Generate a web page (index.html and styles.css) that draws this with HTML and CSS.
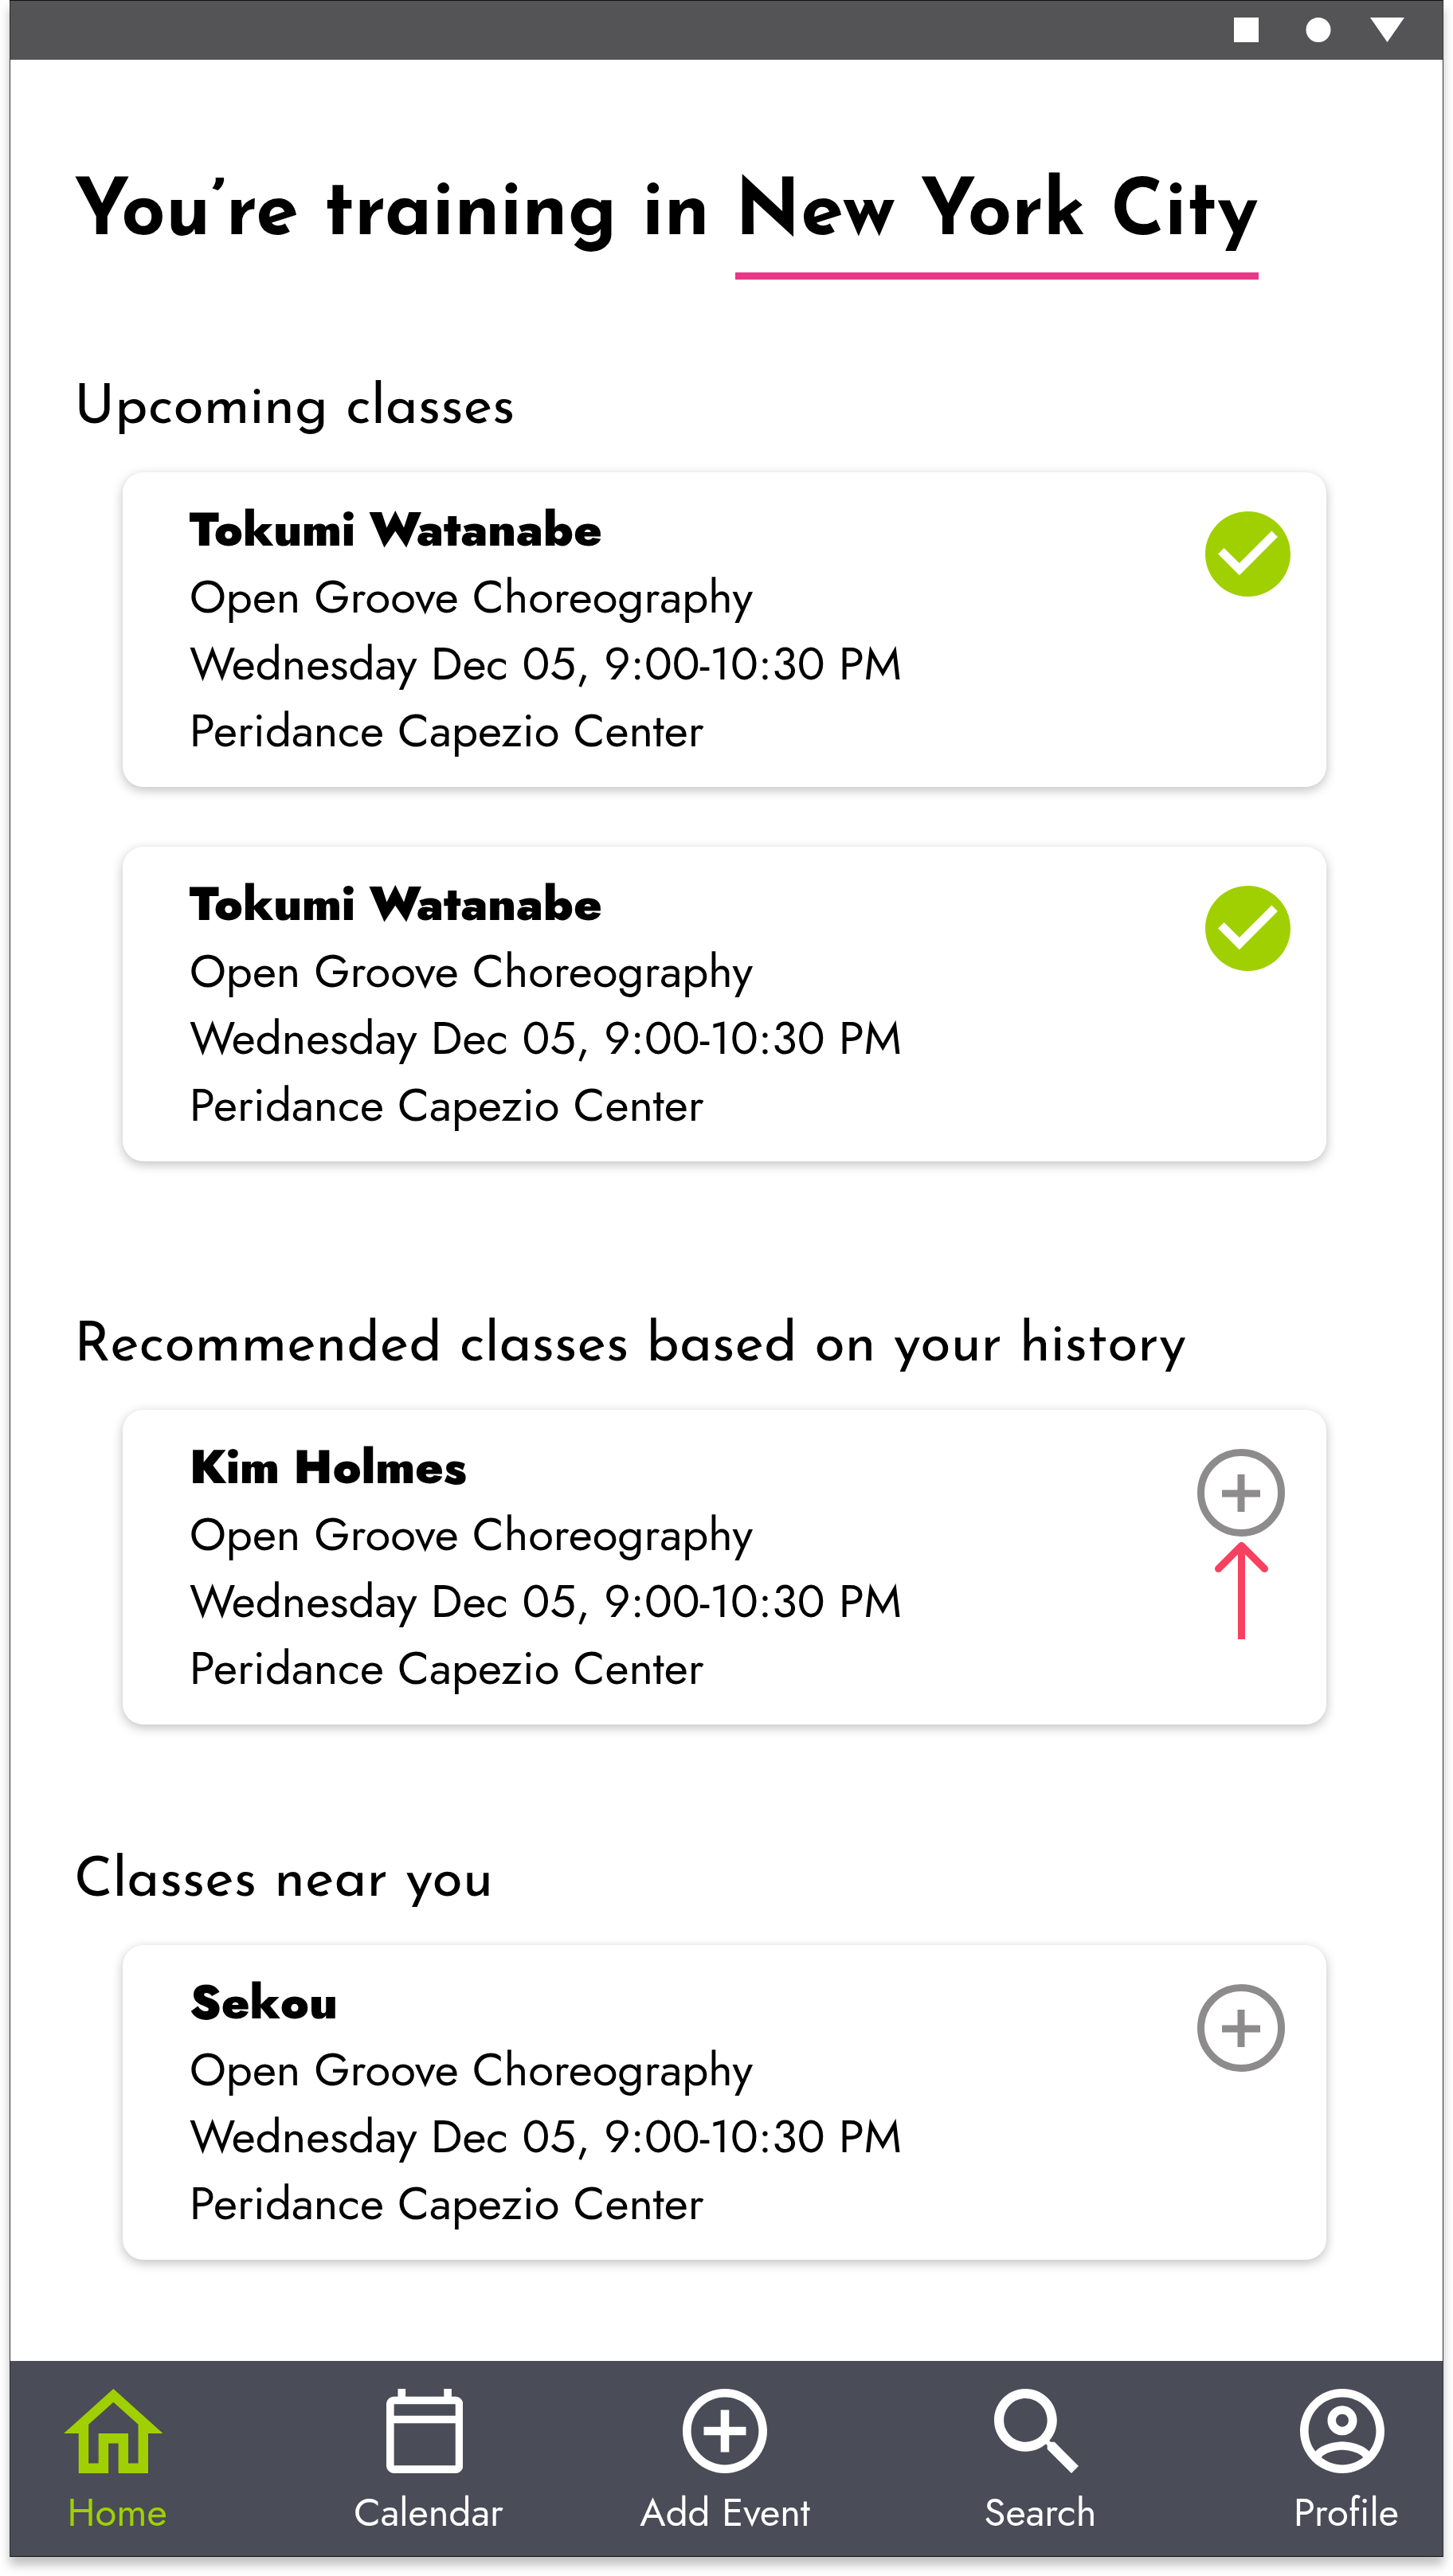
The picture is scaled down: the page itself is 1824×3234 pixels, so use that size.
FILE: index.html
```html
<!DOCTYPE html>
<html lang="en">
<head>
  <meta charset="utf-8">
  <meta name="viewport" content="width=device-width, initial-scale=1">
  <title>Dance classes</title>
  <link rel="stylesheet" href="styles.css">
</head>
<body>
  <div class="screen">
    <header class="status-bar">
      <svg class="status-icons" viewBox="0 0 214 31" aria-hidden="true">
        <rect width="31" height="31"/>
        <circle cx="106" cy="15.5" r="15.5"/>
        <path d="M171 0h43l-21.5 31z"/>
      </svg>
    </header>

    <main class="content">
      <h1 class="title">You’re training in <a class="city" href="#city">New York City</a></h1>

      <section class="section">
        <h2 class="section-title">Upcoming classes</h2>
        <div class="cards">
          <article class="card">
            <div class="card-text">
              <h3 class="teacher">Tokumi Watanabe</h3>
              <p>Open Groove Choreography</p>
              <p>Wednesday Dec 05, 9:00-10:30 PM</p>
              <p>Peridance Capezio Center</p>
            </div>
            <div class="card-action">
              <button class="booked" type="button" aria-label="Booked">
                <svg viewBox="2 2 20 20" aria-hidden="true"><path d="M12 2C6.48 2 2 6.48 2 12s4.48 10 10 10 10-4.48 10-10S17.52 2 12 2zm-2 15l-5-5 1.41-1.41L10 14.17l7.59-7.59L19 8l-9 9z"/></svg>
              </button>
            </div>
          </article>
          <article class="card">
            <div class="card-text">
              <h3 class="teacher">Tokumi Watanabe</h3>
              <p>Open Groove Choreography</p>
              <p>Wednesday Dec 05, 9:00-10:30 PM</p>
              <p>Peridance Capezio Center</p>
            </div>
            <div class="card-action">
              <button class="booked" type="button" aria-label="Booked">
                <svg viewBox="2 2 20 20" aria-hidden="true"><path d="M12 2C6.48 2 2 6.48 2 12s4.48 10 10 10 10-4.48 10-10S17.52 2 12 2zm-2 15l-5-5 1.41-1.41L10 14.17l7.59-7.59L19 8l-9 9z"/></svg>
              </button>
            </div>
          </article>
        </div>
      </section>

      <section class="section section-recommended">
        <h2 class="section-title">Recommended classes based on your history</h2>
        <div class="cards">
          <article class="card">
            <div class="card-text">
              <h3 class="teacher">Kim Holmes</h3>
              <p>Open Groove Choreography</p>
              <p>Wednesday Dec 05, 9:00-10:30 PM</p>
              <p>Peridance Capezio Center</p>
            </div>
            <div class="card-action card-action-add">
              <button class="add" type="button" aria-label="Add class">
                <svg viewBox="0 0 110 110" aria-hidden="true"><circle cx="55" cy="55" r="50.5"/><path d="M55 32v47M31 56h48"/></svg>
              </button>
              <svg class="arrow" viewBox="0 0 67 122" aria-hidden="true"><path class="arrow-head" d="M4.500 33.500l29-29 29 29"/><path d="M33.500 6v116"/></svg>
            </div>
          </article>
        </div>
      </section>

      <section class="section section-near">
        <h2 class="section-title">Classes near you</h2>
        <div class="cards">
          <article class="card">
            <div class="card-text">
              <h3 class="teacher">Sekou</h3>
              <p>Open Groove Choreography</p>
              <p>Wednesday Dec 05, 9:00-10:30 PM</p>
              <p>Peridance Capezio Center</p>
            </div>
            <div class="card-action card-action-add">
              <button class="add" type="button" aria-label="Add class">
                <svg viewBox="0 0 110 110" aria-hidden="true"><circle cx="55" cy="55" r="50.5"/><path d="M55 32v47M31 56h48"/></svg>
              </button>
            </div>
          </article>
        </div>
      </section>
    </main>

    <nav class="tabs" aria-label="Main">
      <a class="tab tab-current" href="#home" aria-current="page">
        <svg class="tab-icon" viewBox="2 3 20 17" aria-hidden="true"><path d="M12 5.69l5 4.5V18h-2v-6H9v6H7v-7.81l5-4.5M12 3L2 12h3v8h6v-6h2v6h6v-8h3L12 3z"/></svg>
        <span>Home</span>
      </a>
      <a class="tab" href="#calendar">
        <svg class="tab-icon" viewBox="2 1 20 22" aria-hidden="true"><path d="M20 3h-1V1h-2v2H7V1H5v2H4c-1.100 0-2 .9-2 2v16c0 1.100.9 2 2 2h16c1.100 0 2-.9 2-2V5c0-1.100-.9-2-2-2zm0 18H4V10h16v11zm0-13H4V5h16v3z"/></svg>
        <span>Calendar</span>
      </a>
      <a class="tab" href="#add">
        <svg class="tab-icon tab-icon-centered" viewBox="2 2 20 20" aria-hidden="true"><path d="M13 7h-2v4H7v2h4v4h2v-4h4v-2h-4V7zm-1-5C6.490 2 2 6.490 2 12s4.490 10 10 10 10-4.490 10-10S17.510 2 12 2zm0 18c-4.410 0-8-3.590-8-8s3.590-8 8-8 8 3.590 8 8-3.590 8-8 8z"/></svg>
        <span>Add Event</span>
      </a>
      <a class="tab" href="#search">
        <svg class="tab-icon" viewBox="3 3 17.490 17.490" aria-hidden="true"><path d="M15.500 14h-.79l-.28-.27C15.410 12.590 16 11.110 16 9.500 16 5.910 13.090 3 9.500 3S3 5.910 3 9.500 5.910 16 9.500 16c1.610 0 3.090-.59 4.230-1.570l.27.28v.79l5 4.990L20.490 19l-4.990-5zm-6 0C7.010 14 5 11.990 5 9.500S7.010 5 9.500 5 14 7.010 14 9.500 11.990 14 9.500 14z"/></svg>
        <span>Search</span>
      </a>
      <a class="tab" href="#profile">
        <svg class="tab-icon" viewBox="2 2 20 20" aria-hidden="true"><path d="M12 2C6.480 2 2 6.480 2 12s4.480 10 10 10 10-4.480 10-10S17.520 2 12 2zM7.070 18.280c.43-.9 3.050-1.780 4.930-1.780s4.510.88 4.930 1.780C15.570 19.360 13.860 20 12 20s-3.570-.64-4.930-1.720zm11.290-1.450c-1.430-1.740-4.900-2.330-6.360-2.330s-4.930.59-6.360 2.330C4.620 15.490 4 13.820 4 12c0-4.410 3.590-8 8-8s8 3.590 8 8c0 1.820-.62 3.490-1.640 4.830zM12 6c-1.940 0-3.500 1.560-3.500 3.500S10.060 13 12 13s3.500-1.560 3.500-3.500S13.940 6 12 6zm0 5c-.83 0-1.500-.67-1.500-1.500S11.170 8 12 8s1.500.67 1.500 1.500S12.830 11 12 11z"/></svg>
        <span>Profile</span>
      </a>
    </nav>
  </div>
</body>
</html>
```
FILE: styles.css
```css
*,
*::before,
*::after {
  box-sizing: border-box;
}

body {
  margin: 0;
  background: #fff;
  color: #000;
  font-family: Jost, Lato, sans-serif;
}

h1,
h2,
h3,
p {
  margin: 0;
}

a {
  color: inherit;
  text-decoration: none;
}

button {
  display: block;
  margin: 0;
  padding: 0;
  border: 0;
  background: none;
  cursor: pointer;
}

svg {
  display: block;
}

.screen {
  margin: 0 12px 24px;
  border: 1px solid #333;
  border-top-color: #111;
  border-bottom-color: #111;
  background: #fff;
  box-shadow: 0 10px 12px rgba(0, 0, 0, 0.25);
}

/* Status bar */
.status-bar {
  display: flex;
  justify-content: flex-end;
  padding: 21px 48px 22px;
  background: #545456;
}

.status-icons {
  height: 31px;
  fill: #fff;
}

/* Page content */
.content {
  padding: 146px 146px 127px 80px;
}

.title {
  font: 700 97px/97px "Josefin Sans", Lato, sans-serif;
}

.city {
  display: inline-block;
  padding-bottom: 24px;
  border-bottom: 9px solid #e83785;
}

.section {
  margin-top: 128px;
}

.section-recommended {
  margin-top: 198px;
}

.section-near {
  margin-top: 163px;
}

.section-title {
  font: 400 70px/70px "Josefin Sans", Lato, sans-serif;
}

.cards {
  display: flex;
  flex-direction: column;
  gap: 75px;
  margin: 44px 0 0 61px;
}

/* Class card */
.card {
  display: flex;
  justify-content: space-between;
  padding: 30px 0 29px 84px;
  border-radius: 26px;
  background: #fff;
  box-shadow: 0 4px 14px rgba(0, 0, 0, 0.25);
}

.card-text {
  font-size: 58px;
  line-height: 84px;
}

.teacher {
  font-size: 59px;
  font-weight: 900;
}

.card-action {
  display: flex;
  flex-direction: column;
  align-items: center;
  gap: 7px;
  height: 0;
  padding: 19px 45px 0 0;
}

.card-action-add {
  padding-right: 52px;
}

.booked {
  width: 107px;
  fill: #a0d001;
}

.add {
  width: 110px;
  fill: none;
  stroke: #8d8b8c;
  stroke-width: 9px;
}

.arrow {
  flex: none;
  width: 67px;
  fill: none;
  stroke: #f84060;
  stroke-width: 9px;
}

.arrow-head {
  stroke-linecap: round;
  stroke-linejoin: round;
}

/* Bottom tabs */
.tabs {
  display: grid;
  grid-template-columns: 268fr 514fr 230fr 562fr 206fr;
  padding: 35px 18px 20px 0;
  background: #4a4c57;
}

.tab {
  display: flex;
  flex-direction: column;
  align-items: center;
  gap: 14px;
  color: #fff;
  font-size: 49px;
  line-height: 70px;
}

.tab-current {
  color: #a0d001;
}

.tab-icon {
  height: 106px;
  margin-right: 10px;
  fill: currentColor;
}

.tab-icon-centered {
  margin-right: 0;
}
```
